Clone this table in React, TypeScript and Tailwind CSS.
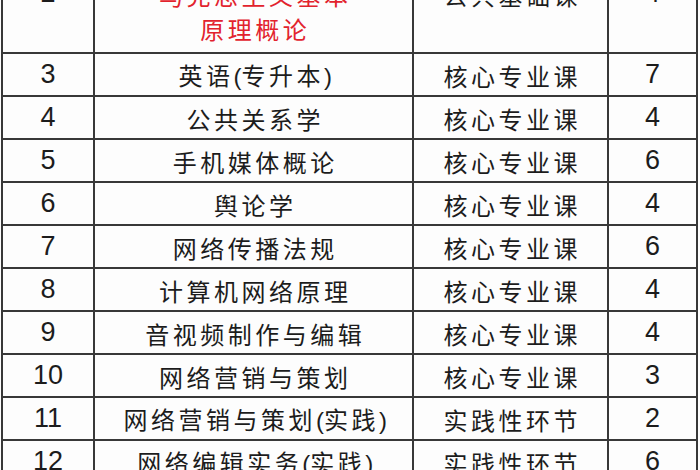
import React from 'react';

type Row = { no: string; name: string; type: string; credit: string };

const rows: Row[] = [
  { no: '3', name: '英语(专升本)', type: '核心专业课', credit: '7' },
  { no: '4', name: '公共关系学', type: '核心专业课', credit: '4' },
  { no: '5', name: '手机媒体概论', type: '核心专业课', credit: '6' },
  { no: '6', name: '舆论学', type: '核心专业课', credit: '4' },
  { no: '7', name: '网络传播法规', type: '核心专业课', credit: '6' },
  { no: '8', name: '计算机网络原理', type: '核心专业课', credit: '4' },
  { no: '9', name: '音视频制作与编辑', type: '核心专业课', credit: '4' },
  { no: '10', name: '网络营销与策划', type: '核心专业课', credit: '3' },
  { no: '11', name: '网络营销与策划(实践)', type: '实践性环节', credit: '2' },
  { no: '12', name: '网络编辑实务(实践)', type: '实践性环节', credit: '6' },
];

const grid = 'grid grid-cols-[92px_319px_195px_89px]';
const cell = 'border-r-2 border-b-2 border-[#383838] flex items-center justify-center';
const cjk = "font-['Noto_Sans_CJK_SC',sans-serif] text-[24px] tracking-[3.5px] pl-[3.5px]";
const num = "font-['Liberation_Sans',Arial,sans-serif] text-[27px]";

// parentheses in the source are half-width and sit tight against the text
const CourseName = ({ text }: { text: string }) => (
  <span className="pt-[3px]">
    {text.split(/([()])/).map((part, i) =>
      part === '(' || part === ')' ? (
        <span key={i} className="tracking-normal font-['Liberation_Sans',sans-serif] font-light">
          {part}
        </span>
      ) : (
        <span key={i}>{part}</span>
      )
    )}
  </span>
);

const App: React.FC = () => {
  return (
    <div className="w-[700px] h-[470px] overflow-hidden bg-[#fdfdfd] text-[#1c1c1c]">
      <div className="ml-px -mt-[22px] w-[697px] border-l-2 border-[#383838]">
        {/* Row 2 (partly cut off at top) */}
        <div className={grid}>
          <div className={`${cell} h-[76px] items-start ${num} leading-[28px]`}>
            <span className="mt-px">2</span>
          </div>
          <div className={`${cell} h-[76px] flex-col items-center justify-start ${cjk} leading-[34px] text-[#e2232d]`}>
            <span>马克思主义基本</span>
            <span>原理概论</span>
          </div>
          <div className={`${cell} h-[76px] items-start ${cjk} leading-[34px]`}>公共基础课</div>
          <div className={`${cell} h-[76px] items-start ${num} leading-[28px]`}>
            <span className="mt-px">4</span>
          </div>
        </div>

        {/* Remaining course rows */}
        {rows.map((r) => (
          <div key={r.no} className={grid}>
            <div className={`${cell} h-[43px] ${num}`}>{r.no}</div>
            <div className={`${cell} h-[43px] ${cjk}`}>
              <CourseName text={r.name} />
            </div>
            <div className={`${cell} h-[43px] ${cjk}`}>
              <span className="pt-[3px]">{r.type}</span>
            </div>
            <div className={`${cell} h-[43px] ${num}`}>{r.credit}</div>
          </div>
        ))}
      </div>
    </div>
  );
};

export default App;
